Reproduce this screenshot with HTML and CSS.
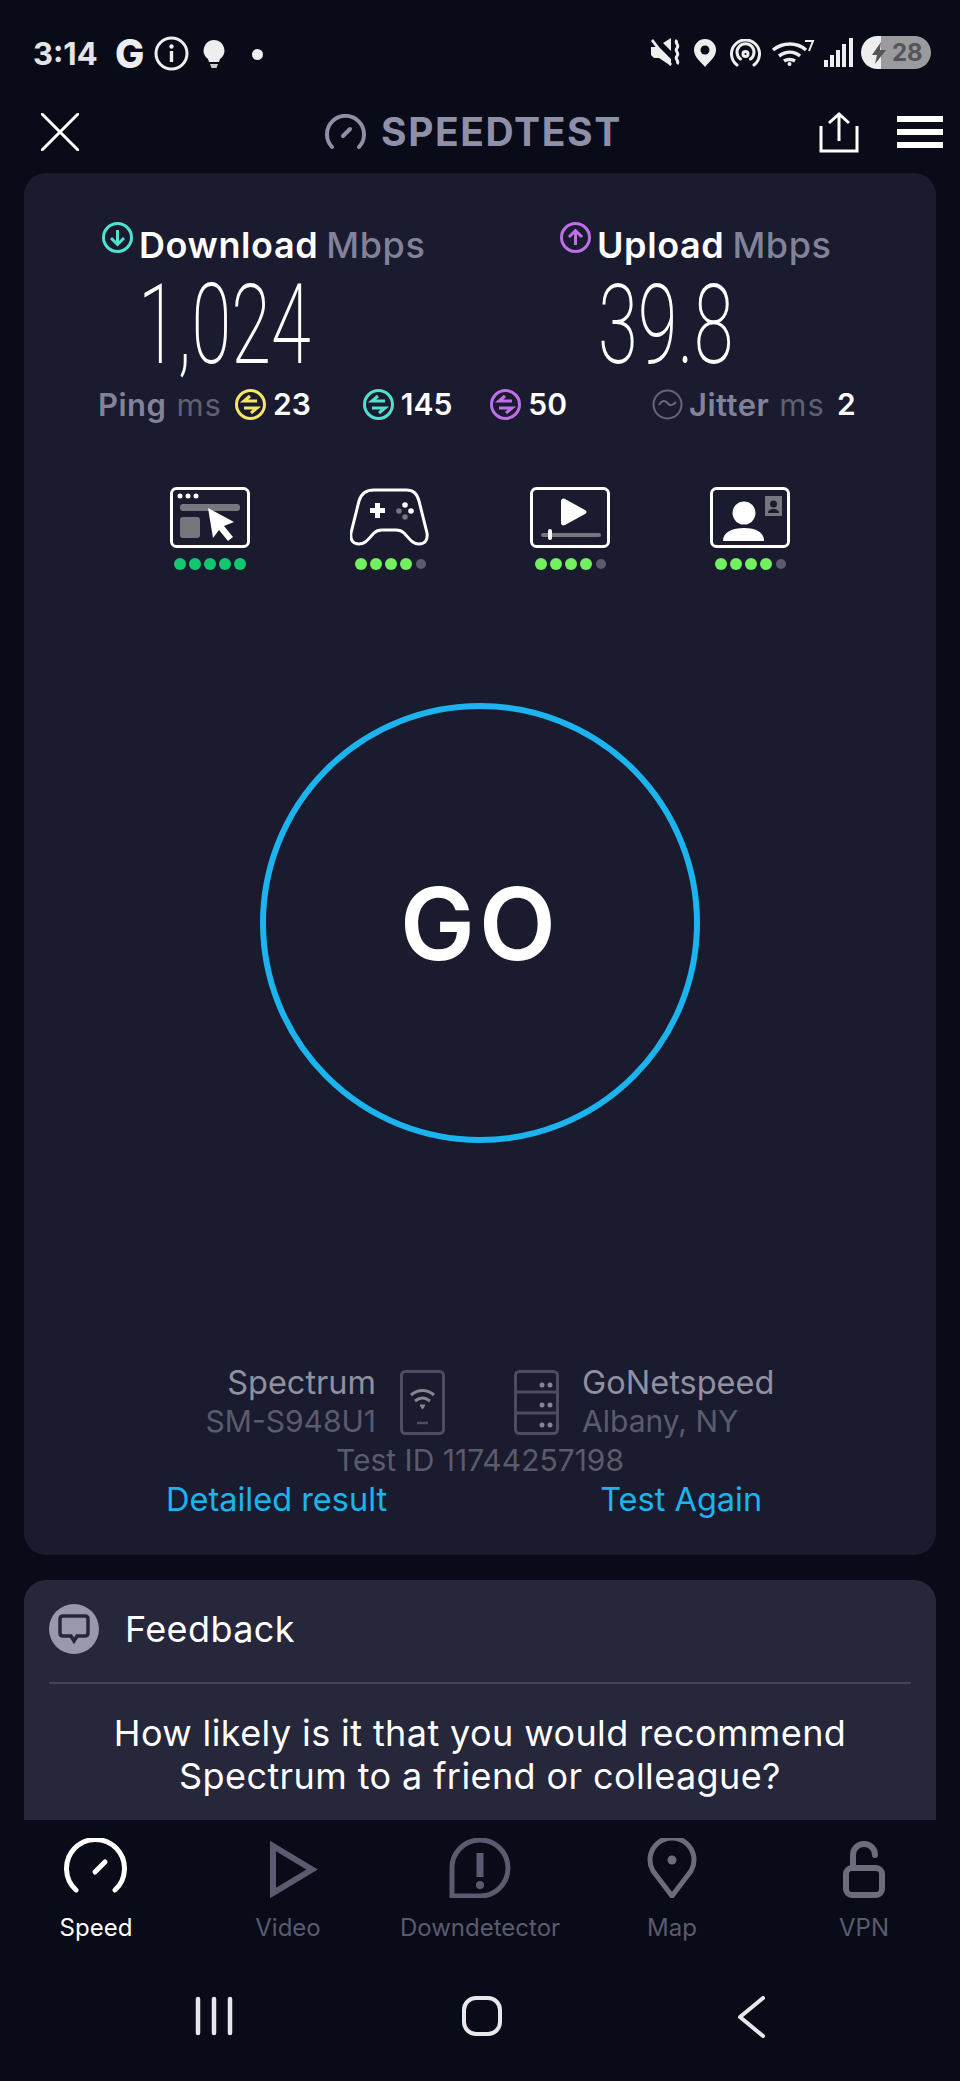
FILE: index.html
```html
<!DOCTYPE html>
<html lang="en">
<head>
  <meta charset="UTF-8" />
  <meta name="viewport" content="width=device-width, initial-scale=1.0"/>
  <title>Speedtest</title>
  <link rel="stylesheet" href="styles.css">
</head>
<body>
  <div class="phone">

    <div class="status-bar">
      <span class="clock">3:14</span>
      <span class="status-g">G</span>
      <svg class="info-icon" width="35" height="35" viewBox="0 0 35 35"><circle cx="17.5" cy="17.5" r="15.5" fill="none" stroke="#eee" stroke-width="3"/><circle cx="17.5" cy="10.5" r="2.2" fill="#eee"/><rect x="15.8" y="15" width="3.4" height="11" fill="#eee"/></svg>
      <svg class="bulb-icon" width="22" height="29" viewBox="0 0 22 29"><path d="M11 0a10.500 10.500 0 0 0-6 19l1 3h10l1-3a10.500 10.500 0 0 0-6-19z" fill="#eee"/><path d="M7 24h8l-1.500 4h-5z" fill="#ccc"/></svg>
      <span class="status-dot"></span>
      <div class="status-right">
        <svg width="31" height="29" viewBox="0 0 31 29"><path d="M0 9h5l2-1 13 13v7L8 20H3l-3-3zM12 5l8-5v13zM2 1l19 25-2 2L0 3z" fill="#eee"/><path d="M26 2c-3 3 3 5 0 8s3 5 0 8 3 5 0 8" fill="none" stroke="#eee" stroke-width="3"/></svg>
        <svg class="gap-12" width="22" height="28" viewBox="0 0 22 28"><path d="M11 0a11 11 0 0 0-11 11c0 7 7 12 11 17 4-5 11-10 11-17a11 11 0 0 0-11-11z" fill="#eee"/><circle cx="11" cy="11" r="4.500" fill="#0a0b18"/></svg>
        <svg class="gap-14" width="31" height="28" viewBox="0 0 31 28" fill="none" stroke="#eee" stroke-width="3" stroke-linecap="round"><path d="M7 26a14 14 0 1 1 17 0"/><path d="M10.500 20a8.500 8.500 0 1 1 10 0"/><circle cx="15.500" cy="15" r="2.500"/></svg>
        <svg class="gap-10" width="44" height="28" viewBox="0 0 44 28" fill="none" stroke="#eee" stroke-width="3.500"><path d="M2 11c10-8 24-8 33 0"/><path d="M8 17c7-5 15-5 21 0"/><path d="M13 22c3-2 8-2 11 0"/><circle cx="18.500" cy="25" r="2" fill="#eee" stroke="none"/><path d="M34 2h8l-4 10" stroke-width="2"/></svg>
        <svg class="gap-9" width="29" height="29" viewBox="0 0 29 29" fill="#eee"><rect x="0" y="22" width="4" height="7"/><rect x="6" y="17" width="4" height="12"/><rect x="12" y="12" width="4" height="17"/><rect x="18" y="6" width="4" height="23"/><rect x="25" y="0" width="4" height="29"/></svg>
        <div class="battery">
          <svg width="14" height="22" viewBox="0 0 14 22"><path d="M9 0L0 13h5l-2 9 11-14H8z" fill="#555"/></svg>
          <span class="battery-num">28</span>
        </div>
      </div>
    </div>

    <div class="top-bar">
      <svg width="38" height="38" viewBox="0 0 38 38"><path d="M1 1l36 36M37 1L1 37" stroke="#fff" stroke-width="3" stroke-linecap="round"/></svg>
      <svg class="title-icon" width="41" height="36" viewBox="0 0 41 36" fill="none" stroke="#8f90a8" stroke-width="4" stroke-linecap="round"><path d="M7 33a18.500 18.500 0 1 1 27 0"/><path d="M18 22l7-7"/></svg>
      <span class="app-title">SPEEDTEST</span>
      <svg class="share-icon" width="40" height="42" viewBox="0 0 40 42" fill="none" stroke="#fff" stroke-width="3"><path d="M2 15v25h36V15"/><path d="M20 30V3M10 12l10-9 10 9"/></svg>
      <div class="burger"><span></span><span></span><span></span></div>
    </div>

    <div class="result-card">
      <div class="speeds">
        <div class="speed-col">
          <div class="speed-head">
            <svg class="head-icon" width="31" height="31" viewBox="0 0 31 31" fill="none" stroke="#52e0d0" stroke-width="3"><circle cx="15.500" cy="15.500" r="14"/><path d="M15.500 8v14M9 16l6.500 6.500L22 16"/></svg>
            <span class="head-name">Download</span><span class="head-unit">Mbps</span>
          </div>
          <div class="big-num big-down">1,024</div>
        </div>
        <div class="speed-col">
          <div class="speed-head">
            <svg class="head-icon" width="31" height="31" viewBox="0 0 31 31" fill="none" stroke="#bf6fe8" stroke-width="3"><circle cx="15.500" cy="15.500" r="14"/><path d="M15.500 23V9M9 15l6.500-6.500L22 15"/></svg>
            <span class="head-name">Upload</span><span class="head-unit">Mbps</span>
          </div>
          <div class="big-num big-up">39.8</div>
        </div>
      </div>

      <div class="ping-row">
        <span class="ping-name">Ping</span><span class="ping-unit">ms</span>
        <svg class="ping-icon first-icon" width="31" height="31" viewBox="0 0 31 31" fill="none" stroke="#f5e663" stroke-width="3"><circle cx="15.500" cy="15.500" r="14"/><path d="M22 12H9l6-5M9 19h13l-6 5"/></svg>
        <span class="ping-val">23</span>
        <svg class="ping-icon second-icon" width="31" height="31" viewBox="0 0 31 31" fill="none" stroke="#52e0d0" stroke-width="3"><circle cx="15.500" cy="15.500" r="14"/><path d="M22 12H9l6-5M9 19h13l-6 5"/></svg>
        <span class="ping-val">145</span>
        <svg class="ping-icon third-icon" width="31" height="31" viewBox="0 0 31 31" fill="none" stroke="#bf6fe8" stroke-width="3"><circle cx="15.500" cy="15.500" r="14"/><path d="M22 12H9l6-5M9 19h13l-6 5"/></svg>
        <span class="ping-val">50</span>
        <svg class="ping-icon jitter-icon" width="31" height="31" viewBox="0 0 31 31" fill="none" stroke="#65667a" stroke-width="2"><circle cx="15.500" cy="15.500" r="14"/><path d="M7 16c3-5 6-5 8.500-2s5 3 8.500-1"/></svg>
        <span class="ping-name">Jitter</span><span class="ping-unit">ms</span>
        <span class="ping-val jitter-val">2</span>
      </div>

      <div class="quality-row">
        <div class="quality">
          <svg width="80" height="61" viewBox="0 0 80 61"><rect x="1.500" y="1.500" width="77" height="58" rx="5" fill="none" stroke="#fff" stroke-width="3"/><circle cx="10" cy="9" r="2.500" fill="#fff"/><circle cx="18" cy="9" r="2.500" fill="#fff"/><circle cx="26" cy="9" r="2.500" fill="#fff"/><rect x="10" y="17" width="60" height="7" rx="3" fill="#76767f"/><rect x="10" y="30" width="20" height="21" rx="3" fill="#76767f"/><path d="M38 21l26 14-10 4 9 11-5 4-9-11-6 8z" fill="#fff"/></svg>
          <div class="dots"><i class="dot full"></i><i class="dot full"></i><i class="dot full"></i><i class="dot full"></i><i class="dot full"></i></div>
        </div>
        <div class="quality">
          <svg width="80" height="61" viewBox="0 0 80 61"><path d="M24 3h32c8 0 11 4 13 11l8 32c1 7-2 11-8 11-7 0-10-6-15-11-3-3-5-3-8-3H32c-3 0-5 0-8 3-5 5-8 11-15 11-6 0-9-4-8-11l8-32C11 7 16 3 24 3z" fill="none" stroke="#fff" stroke-width="3"/><path d="M25 16h5v5h5v5h-5v5h-5v-5h-5v-5h5z" fill="#fff"/><circle cx="55" cy="18" r="2.800" fill="#fff"/><circle cx="61" cy="24" r="2.800" fill="#fff"/><circle cx="49" cy="24" r="2.800" fill="#76767f"/><circle cx="55" cy="30" r="2.800" fill="#76767f"/></svg>
          <div class="dots"><i class="dot ok"></i><i class="dot ok"></i><i class="dot ok"></i><i class="dot ok"></i><i class="dot off"></i></div>
        </div>
        <div class="quality">
          <svg width="80" height="61" viewBox="0 0 80 61"><rect x="1.500" y="1.500" width="77" height="58" rx="5" fill="none" stroke="#fff" stroke-width="3"/><path d="M31 14c0-2 2-3 4-2l20 11c2 1 2 3 0 4L35 38c-2 1-4 0-4-2z" fill="#fff"/><rect x="11" y="46" width="60" height="4" rx="2" fill="#76767f"/><rect x="18" y="42" width="4" height="11" rx="2" fill="#fff"/></svg>
          <div class="dots"><i class="dot ok"></i><i class="dot ok"></i><i class="dot ok"></i><i class="dot ok"></i><i class="dot off"></i></div>
        </div>
        <div class="quality">
          <svg width="80" height="61" viewBox="0 0 80 61"><rect x="1.500" y="1.500" width="77" height="58" rx="5" fill="none" stroke="#fff" stroke-width="3"/><circle cx="34" cy="26" r="11.500" fill="#fff"/><path d="M13 54c0-9 9-13 21-13s20 4 20 13z" fill="#fff"/><rect x="55" y="9" width="17" height="20" fill="#76767f"/><circle cx="63.500" cy="17" r="3.500" fill="#1a1b2e"/><path d="M58 26c0-3 3-4 5.500-4s5.500 1 5.500 4z" fill="#1a1b2e"/></svg>
          <div class="dots"><i class="dot ok"></i><i class="dot ok"></i><i class="dot ok"></i><i class="dot ok"></i><i class="dot off"></i></div>
        </div>
      </div>

      <div class="go-ring"><span class="go-text">GO</span></div>

      <div class="server-row">
        <div class="server-text align-right">
          <div class="server-main">Spectrum</div>
          <div class="server-sub">SM-S948U1</div>
        </div>
        <svg class="phone-icon" width="45" height="65" viewBox="0 0 45 65" fill="none" stroke="#4c4d60" stroke-width="3"><rect x="1.500" y="1.500" width="42" height="62" rx="4"/><path d="M11 25c7-6 16-6 23 0M15 31c5-4 10-4 15 0" stroke="#85868f" stroke-width="3"/><path d="M20 35h5l-2.500 4z" fill="#85868f" stroke="#85868f" stroke-width="1"/><path d="M17 53h11" stroke-width="2.500"/></svg>
        <svg class="rack-icon" width="45" height="65" viewBox="0 0 45 65" fill="none" stroke="#4c4d60" stroke-width="3"><rect x="1.500" y="1.500" width="42" height="62" rx="4"/><path d="M1.500 22h42M1.500 43h42"/><g fill="#85868f" stroke="none"><circle cx="28" cy="15" r="2.500"/><circle cx="36" cy="15" r="2.500"/><circle cx="28" cy="35" r="2.500"/><circle cx="36" cy="35" r="2.500"/><circle cx="28" cy="55" r="2.500"/><circle cx="36" cy="55" r="2.500"/></g></svg>
        <div class="server-text">
          <div class="server-main">GoNetspeed</div>
          <div class="server-sub">Albany, NY</div>
        </div>
      </div>
      <div class="test-id">Test ID 11744257198</div>
      <div class="result-links">
        <span class="link">Detailed result</span>
        <span class="link">Test Again</span>
      </div>
    </div>

    <div class="feedback-card">
      <div class="feedback-head">
        <div class="feedback-badge">
          <svg width="32" height="30" viewBox="0 0 32 30"><path d="M5 2h22c2 0 3 1 3 3v14c0 2-1 3-3 3h-8l-3 5-3-5H5c-2 0-3-1-3-3V5c0-2 1-3 3-3z" fill="none" stroke="#26273a" stroke-width="3.500"/></svg>
        </div>
        <span class="feedback-title">Feedback</span>
      </div>
      <div class="feedback-question">How likely is it that you would recommend<br>Spectrum to a friend or colleague?</div>
    </div>

    <div class="tab-bar">
      <div class="tab active">
        <svg width="64" height="60" viewBox="0 0 64 60" fill="none" stroke="#fff" stroke-width="5" stroke-linecap="round"><path d="M12 52a29 29 0 1 1 39 0"/><path d="M31 34l10-10"/></svg>
        <span>Speed</span>
      </div>
      <div class="tab">
        <svg width="64" height="60" viewBox="0 0 64 60" fill="none" stroke="#5a5b70" stroke-width="6"><path d="M17 8v47l39-23.500z"/></svg>
        <span>Video</span>
      </div>
      <div class="tab">
        <svg width="64" height="60" viewBox="0 0 64 60" fill="none" stroke="#5a5b70" stroke-width="5"><path d="M4 57V31A28 28 0 1 1 32 58H4z"/><path d="M32 15v24" stroke-width="7"/><circle cx="32" cy="47" r="4" fill="#5a5b70" stroke="none"/></svg>
        <span>Downdetector</span>
      </div>
      <div class="tab">
        <svg width="64" height="60" viewBox="0 0 64 60" fill="none" stroke="#6c6d7c" stroke-width="5"><path d="M32 58L13 33A22 22 0 1 1 51 33z" stroke-linejoin="round"/><circle cx="32" cy="22" r="4.500" fill="#6c6d7c" stroke="none"/></svg>
        <span>Map</span>
      </div>
      <div class="tab">
        <svg width="64" height="60" viewBox="0 0 64 60" fill="none" stroke="#6c6d7c" stroke-width="6" stroke-linecap="round"><rect x="14" y="30" width="36" height="27" rx="6"/><path d="M21 30V17a11 11 0 0 1 22 0"/></svg>
        <span>VPN</span>
      </div>
    </div>

    <div class="system-nav">
      <svg width="38" height="40" viewBox="0 0 38 40" stroke="#e8e8ec" stroke-width="4.500" stroke-linecap="round"><path d="M3 3v34M19 3v34M35 3v34"/></svg>
      <svg class="home-icon" width="40" height="40" viewBox="0 0 40 40"><rect x="2" y="2" width="36" height="36" rx="12" fill="none" stroke="#e8e8ec" stroke-width="4"/></svg>
      <svg width="28" height="42" viewBox="0 0 28 42"><path d="M26 2L3 21l23 19" fill="none" stroke="#e8e8ec" stroke-width="4" stroke-linecap="round" stroke-linejoin="round"/></svg>
    </div>

  </div>
</body>
</html>
```

FILE: styles.css
```css
* {
  box-sizing: border-box;
}

body {
  margin: 0;
  background-color: #0a0b18;
  font-family: Inter, "Open Sans", sans-serif;
  color: #fff;
}

.phone {
  width: 960px;
  height: 2081px;
  display: flex;
  flex-direction: column;
  overflow: hidden;
}

/* status bar */
.status-bar {
  height: 100px;
  padding: 36px 29px 0 33px;
  display: flex;
  align-items: flex-start;
  flex-shrink: 0;
}

.clock {
  width: 82px;
  font-size: 31px;
  line-height: 36px;
  font-weight: 700;
  color: #e4e4e4;
}

.status-g {
  width: 39px;
  font-size: 39px;
  line-height: 36px;
  font-weight: 800;
  color: #eee;
}

.bulb-icon {
  margin: 4px 0 0 14px;
}

.status-dot {
  width: 11px;
  height: 11px;
  margin: 13px 0 0 27px;
  border-radius: 50%;
  background-color: #eee;
}

.status-right {
  margin-left: auto;
  display: flex;
  align-items: center;
}

.gap-12 { margin-left: 12px; }
.gap-14 { margin-left: 14px; }
.gap-10 { margin-left: 10px; }
.gap-9 { margin-left: 9px; }

.battery {
  width: 70px;
  height: 33px;
  margin-left: 8px;
  padding-left: 11px;
  border-radius: 17px;
  display: flex;
  align-items: center;
  background: linear-gradient(to right, #eee 0, #eee 29%, #9a9a9f 29%);
}

.battery-num {
  margin-left: 6px;
  font-size: 24px;
  font-weight: 700;
  color: #555;
}

/* top bar */
.top-bar {
  height: 73px;
  padding: 0 17px 10px 27px;
  display: flex;
  align-items: center;
  flex-shrink: 0;
}

.top-bar > svg:first-child {
  margin-left: 14px;
}

.title-icon {
  margin-left: 246px;
}

.app-title {
  margin-left: 15px;
  font-size: 39px;
  font-weight: 700;
  letter-spacing: 1.6px;
  color: #8f90a8;
}

.share-icon {
  margin-left: auto;
}

.burger {
  width: 46px;
  margin-left: 38px;
  display: flex;
  flex-direction: column;
  gap: 7px;
}

.burger span {
  height: 6px;
  background-color: #fff;
}

/* main card */
.result-card {
  height: 1382px;
  margin: 0 24px;
  padding-top: 48px;
  border-radius: 22px;
  background-color: #1a1b2e;
  flex-shrink: 0;
}

.speeds {
  padding-left: 78px;
  display: flex;
}

.speed-col {
  flex: 0 0 458px;
}

.speed-head {
  display: flex;
  align-items: flex-start;
}

.head-icon {
  margin: 1px 6px 0 0;
  flex-shrink: 0;
}

.head-name {
  font-size: 36px;
  line-height: 40px;
  font-weight: 600;
  margin-top: 4px;
  letter-spacing: 0.6px;
}

.head-unit {
  margin: 4px 0 0 8px;
  font-size: 36px;
  line-height: 40px;
  font-weight: 500;
  letter-spacing: 0.6px;
  color: #82839a;
}

.big-num {
  width: 270px;
  margin-top: 4px;
  font-family: Roboto, sans-serif;
  font-size: 112px;
  line-height: 112px;
  font-weight: 200;
  white-space: nowrap;
  transform: scaleX(0.645);
  transform-origin: left center;
}

.big-down {
  margin-left: 36px;
}

.big-up {
  margin-left: 38px;
}

.ping-row {
  height: 32px;
  margin-top: 7px;
  padding-left: 74px;
  display: flex;
  align-items: center;
}

.ping-name {
  font-size: 31px;
  font-weight: 600;
  letter-spacing: 0.5px;
  color: #82839a;
}

.ping-unit {
  margin-left: 10px;
  font-size: 31px;
  letter-spacing: 1px;
  color: #5f6074;
}

.ping-val {
  margin-left: 7px;
  font-size: 30px;
  font-weight: 600;
}

.first-icon { margin-left: 13px; }
.second-icon { margin-left: 52px; }
.third-icon { margin-left: 38px; }
.jitter-icon { margin: 0 6px 0 85px; }
.jitter-val { margin-left: 12px; }

.quality-row {
  margin-top: 67px;
  padding-left: 96px;
  display: flex;
}

.quality {
  width: 180px;
  display: flex;
  flex-direction: column;
  align-items: center;
  gap: 10px;
}

.dots {
  display: flex;
  align-items: center;
  gap: 3px;
}

.dot {
  width: 12px;
  height: 12px;
  border-radius: 50%;
}

.dot.full { background-color: #12c86f; }
.dot.ok { background-color: #72f060; }
.dot.off {
  width: 10px;
  height: 10px;
  margin-left: 1px;
  background-color: #5a5b6c;
}

.go-ring {
  width: 440px;
  height: 440px;
  margin: 133px auto 0;
  border: 6px solid #1cb4ee;
  border-radius: 50%;
  display: flex;
  align-items: center;
  justify-content: center;
}

.go-text {
  font-size: 100px;
  font-weight: 600;
  letter-spacing: 4px;
}

.server-row {
  margin-top: 220px;
  display: flex;
  align-items: center;
}

.server-text {
  line-height: 39px;
}

.align-right {
  width: 352px;
  text-align: right;
}

.server-main {
  font-size: 32.5px;
  color: #8f90a0;
}

.server-sub {
  font-size: 30px;
  color: #5a5b6c;
}

.phone-icon {
  margin-left: 24px;
}

.rack-icon {
  margin: 0 23px 0 69px;
}

.test-id {
  font-size: 30px;
  line-height: 39px;
  text-align: center;
  color: #5a5b6c;
}

.result-links {
  padding-left: 142px;
  display: flex;
}

.link {
  font-size: 32.5px;
  line-height: 39px;
  color: #1cb4ee;
}

.link:last-child {
  margin-left: 213px;
}

/* feedback, cut off by the tab bar */
.feedback-card {
  flex: 1;
  min-height: 0;
  margin: 25px 24px 0;
  padding: 24px 25px 0;
  overflow: hidden;
  border-radius: 22px 22px 0 0;
  background-color: #26273a;
}

.feedback-head {
  padding-bottom: 28px;
  display: flex;
  align-items: center;
  border-bottom: 2px solid #424356;
}

.feedback-badge {
  width: 50px;
  height: 50px;
  border-radius: 50%;
  display: flex;
  align-items: center;
  justify-content: center;
  background-color: #9899ad;
}

.feedback-title {
  margin-left: 26px;
  font-size: 36px;
  letter-spacing: 0.4px;
}

.feedback-question {
  margin-top: 28px;
  font-size: 36px;
  line-height: 43px;
  letter-spacing: 0.4px;
  text-align: center;
}

/* bottom tabs */
.tab-bar {
  height: 150px;
  padding-top: 18px;
  display: flex;
  flex-shrink: 0;
}

.tab {
  width: 192px;
  display: flex;
  flex-direction: column;
  align-items: center;
  font-size: 24px;
  color: #5a5b70;
}

.tab span {
  margin-top: 15px;
}

.tab.active {
  color: #fff;
}

.system-nav {
  height: 111px;
  padding: 26px 195px 0;
  display: flex;
  justify-content: space-between;
  align-items: flex-start;
  flex-shrink: 0;
}

.home-icon {
  margin-right: 6px;
}
```
